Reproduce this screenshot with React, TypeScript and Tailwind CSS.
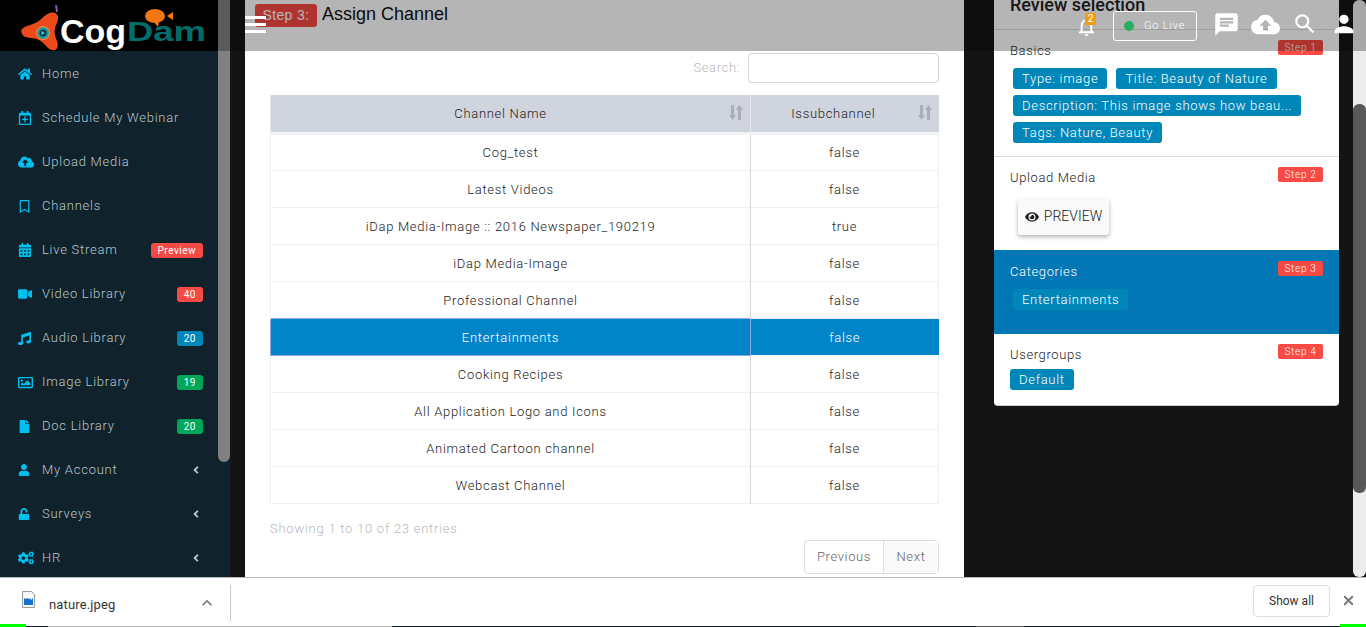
import React from "react";
import { FaHome, FaRegCalendarPlus, FaCloudUploadAlt, FaRegBookmark, FaCalendarAlt, FaVideo, FaMusic, FaRegImage, FaFile, FaUser, FaUnlock, FaCogs, FaAngleLeft, FaEye } from "react-icons/fa";
import { MdChat, MdCloudUpload, MdSearch, MdPerson, MdOutlineNotifications, MdKeyboardArrowUp } from "react-icons/md";
import { X } from "lucide-react";

const menu: { icon: React.ReactNode; label: string; badge?: string; color?: string; arrow?: boolean }[] = [
  { icon: <FaHome size={14} />, label: "Home" },
  { icon: <FaRegCalendarPlus size={14} />, label: "Schedule My Webinar" },
  { icon: <FaCloudUploadAlt size={16} />, label: "Upload Media" },
  { icon: <FaRegBookmark size={13} />, label: "Channels" },
  { icon: <FaCalendarAlt size={14} />, label: "Live Stream", badge: "Preview", color: "bg-[#f74a44]" },
  { icon: <FaVideo size={14} />, label: "Video Library", badge: "40", color: "bg-[#f74a44]" },
  { icon: <FaMusic size={13} />, label: "Audio Library", badge: "20", color: "bg-[#0087ba]" },
  { icon: <FaRegImage size={15} />, label: "Image Library", badge: "19", color: "bg-[#00a65a]" },
  { icon: <FaFile size={13} />, label: "Doc Library", badge: "20", color: "bg-[#00a65a]" },
  { icon: <FaUser size={12} />, label: "My Account", arrow: true },
  { icon: <FaUnlock size={12} />, label: "Surveys", arrow: true },
  { icon: <FaCogs size={16} />, label: "HR", arrow: true },
];

const rows = [
  ["Cog_test", "false"],
  ["Latest Videos", "false"],
  ["iDap Media-Image :: 2016 Newspaper_190219", "true"],
  ["iDap Media-Image", "false"],
  ["Professional Channel", "false"],
  ["Entertainments", "false"],
  ["Cooking Recipes", "false"],
  ["All Application Logo and Icons", "false"],
  ["Animated Cartoon channel", "false"],
  ["Webcast Channel", "false"],
];

function Tag({ children, className = "" }: { children: React.ReactNode; className?: string }) {
  return <span className={`inline-block h-[21px] rounded-[3px] bg-[#0087ba] px-[9px] text-[13px] leading-[21px] tracking-[0.7px] text-white whitespace-nowrap ${className}`}>{children}</span>;
}

function Step({ n }: { n: number }) {
  return <span className="-mt-[1px] flex h-[15px] w-[45px] items-center justify-center rounded-[2px] bg-[#f74a44] text-[10px] tracking-[0.7px] text-white">Step {n}</span>;
}

function SortIcon() {
  return (
    <svg width="14" height="16" viewBox="0 0 14 16" className="text-[#a9aeb8]" fill="currentColor">
      <path d="M2 0h3v10h2l-3.5 5L0 10h2z" />
      <path d="M10.5 0 14 5h-2v10H9V5H7z" />
    </svg>
  );
}

export default function App() {
  return (
    <div className="relative flex h-[627px] w-[1366px] flex-col overflow-hidden bg-[#141414] font-['Roboto',sans-serif] font-light">
      <main className="flex h-[577px] shrink-0">
        {/* Sidebar */}
        <aside className="flex w-[230px] shrink-0">
          <div className="w-[218px] bg-[#10222b]">
            <div className="h-[51px] bg-black" />
            <ul className="pt-[1px]">
              {menu.map((m) => (
                <li key={m.label} className="flex h-[44px] items-center pl-[18px] pr-[15px]">
                  <span className="flex w-[24px] shrink-0 items-center text-[#00c0ef]">{m.icon}</span>
                  <span className="flex-1 text-[13px] tracking-[0.75px] text-[#b8c7ce]">{m.label}</span>
                  {m.badge && (
                    <span className={`flex h-[15px] items-center rounded-[3px] px-[7px] text-[10px] font-normal tracking-[0.5px] text-white ${m.color}`}>{m.badge}</span>
                  )}
                  {m.arrow && <FaAngleLeft size={12} className="mr-[1px] text-[#b8c7ce]" />}
                </li>
              ))}
            </ul>
          </div>
          <div className="w-[12px] bg-[#10222b]">
            <div className="h-[462px] rounded-b-[6px] bg-[#808080]" />
          </div>
        </aside>

        <div className="w-[15px] shrink-0 bg-[#141414]" />

        {/* Main panel */}
        <section className="w-[719px] shrink-0 overflow-hidden bg-white px-[25px]">
          <div className="flex h-[53px] items-start -ml-[15px]">
            <span className="mt-[4px] flex h-[23px] w-[62px] items-center justify-center rounded-[3px] bg-[#f74a44] font-['Liberation_Sans',sans-serif] text-[14px] font-normal tracking-[0.4px] text-white">Step 3:</span>
            <span className="ml-[5px] mt-[3px] font-['Liberation_Sans',sans-serif] text-[18px] font-normal leading-[22px] text-[#111]">Assign Channel</span>
          </div>
          <div className="flex h-[30px] w-[669px] items-center justify-end">
            <span className="mr-[8px] text-[13px] tracking-[0.62px] text-[#b8b8b8]">Search:</span>
            <div className="h-[30px] w-[191px] rounded-[4px] border border-[#d2d6de] bg-white" />
          </div>
          <table className="mt-[12px] w-[669px] table-fixed border-collapse text-[13px] tracking-[0.7px] text-[#222]">
            <thead>
              <tr className="h-[38px] border-b-[3px] border-[#f4f4f4] bg-[#d0d4de]">
                <th className="relative w-[480px] border-l border-r border-[#e8e8e8] font-light">
                  <span className="-ml-[20px]">Channel Name</span>
                  <span className="absolute right-[7px] top-[10px]"><SortIcon /></span>
                </th>
                <th className="relative font-light">
                  <span className="-ml-[23px]">Issubchannel</span>
                  <span className="absolute right-[7px] top-[10px]"><SortIcon /></span>
                </th>
              </tr>
            </thead>
            <tbody>
              {rows.map(([a, b], i) => {
                const sel = i === 5;
                return (
                  <tr key={a} className={`h-[37px] ${sel ? "text-white" : "border-b border-[#f0f0f0]"}`}>
                    <td className={`pt-[2px] text-center ${sel ? "border border-[#8fa9e8] bg-[#0284c9]" : "border-l border-r border-l-[#f0f0f0] border-r-[#d8d8d8]"}`}>{a}</td>
                    <td className={`pt-[2px] text-center ${sel ? "bg-[#0284c9]" : "border-r border-[#f0f0f0]"}`}>{b}</td>
                  </tr>
                );
              })}
            </tbody>
          </table>
          <div className="mt-[13px] flex w-[669px] items-start justify-between">
            <span className="mt-[2px] text-[13px] tracking-[0.75px] text-[#b8b8b8]">Showing 1 to 10 of 23 entries</span>
            <div className="mt-[23px] flex h-[34px] rounded-[4px] border border-[#ddd] text-[13px] tracking-[0.62px] text-[#666]">
              <span className="flex w-[79px] items-center justify-center border-r border-[#ddd]">Previous</span>
              <span className="flex w-[54px] items-center justify-center bg-[#fafafa]">Next</span>
            </div>
          </div>
        </section>

        <div className="w-[30px] shrink-0 bg-[#141414]" />

        {/* Review card */}
        <section className="h-[406px] w-[345px] shrink-0 overflow-hidden rounded-b-[4px] border-b border-[#ccc] bg-white">
          <div className="flex h-[30px] items-start border-b border-[#ddd] pl-[16px]">
            <h3 className="-mt-[5px] text-[18px] leading-[20px] font-medium text-[#222]">Review selection</h3>
          </div>
          <div className="h-[127px] border-b border-[#ddd] pl-[19px] pr-[16px]">
            <div className="-ml-[3px] flex items-start justify-between pt-[11px]">
              <span className="text-[13px] tracking-[0.62px] text-[#222]">Basics</span>
              <Step n={1} />
            </div>
            <div className="mt-[1px] flex flex-wrap gap-x-[9px] gap-y-[6px] pt-[6px]">
              <Tag>Type: image</Tag>
              <Tag>Title: Beauty of Nature</Tag>
              <Tag>Description: This image shows how beau...</Tag>
              <Tag>Tags: Nature, Beauty</Tag>
            </div>
          </div>
          <div className="h-[93px] px-[16px] pt-[11px]">
            <div className="flex items-start justify-between">
              <span className="text-[13px] tracking-[0.62px] text-[#222]">Upload Media</span>
              <Step n={2} />
            </div>
            <div className="ml-[8px] mt-[11px] flex h-[36px] w-[91px] items-center justify-center gap-[5px] rounded-[3px] bg-[#fafafa] text-[14px] text-[#222] shadow-[0_2px_4px_rgba(0,0,0,0.3)]">
              <FaEye size={14} />
              <span>PREVIEW</span>
            </div>
          </div>
          <div className="h-[84px] bg-[#0277b5] pl-[19px] pr-[16px] pt-[12px]">
            <div className="-ml-[3px] flex items-start justify-between">
              <span className="text-[13px] tracking-[0.62px] text-white">Categories</span>
              <Step n={3} />
            </div>
            <Tag className="mt-[7px]">Entertainments</Tag>
          </div>
          <div className="px-[16px] pt-[11px]">
            <div className="flex items-start justify-between">
              <span className="text-[13px] tracking-[0.62px] text-[#222]">Usergroups</span>
              <Step n={4} />
            </div>
            <Tag className="mt-[4px]">Default</Tag>
          </div>
        </section>

        <div className="w-[14px] shrink-0 bg-[#141414]" />
        <div className="flex-1 rounded-[6px] bg-[#ececec]">
          <div className="h-[104px]" />
          <div className="h-[389px] rounded-[6px] bg-[#585858]" />
        </div>
      </main>

      {/* Download bar */}
      <footer className="relative flex h-[50px] shrink-0 items-center border-t border-[#b8b8b8] bg-white">
        <svg width="13" height="17" viewBox="0 0 13 17" className="ml-[22px] mb-[6px] shrink-0">
          <path d="M.5.5h9l3 3v13H.5z" fill="#f4f4f4" stroke="#9a9a9a" />
          <rect x="2" y="4" width="9" height="10" fill="#1272d0" />
          <path d="M2 4h9v3l-2 2-1-2-1 1-2-1-1 1-2-1z" fill="#fff" />
        </svg>
        <span className="ml-[14px] mt-[4px] text-[13px] font-normal tracking-[0.15px] text-[#333]">nature.jpeg</span>
        <MdKeyboardArrowUp size={20} className="ml-[81px] shrink-0 text-[#777]" />
        <div className="ml-[13px] h-[36px] w-px bg-[#c8c8c8]" />
        <div className="mb-[4px] ml-auto flex h-[32px] w-[77px] items-center justify-center rounded-[4px] border border-[#ddd] text-[12px] font-normal text-[#333]">Show all</div>
        <X size={15} strokeWidth={3} className="mb-[4px] ml-[11px] mr-[10px] text-[#777]" />
        <div className="absolute inset-x-0 bottom-0 flex h-px">
          <div className="w-[48px] bg-[#10222b]" />
          <div className="w-[344px] bg-[#b8b8b8]" />
          <div className="w-[584px] bg-[#10222b]" />
          <div className="w-[48px] bg-[#555555]" />
          <div className="flex-1 bg-[#10222b]" />
        </div>
        <div className="absolute bottom-0 left-0 h-[3px] w-[26px] bg-[#00ff00]" />
        <div className="absolute bottom-0 right-0 h-[3px] w-[26px] bg-[#00ff00]" />
      </footer>

      {/* Translucent header over the page */}
      <header className="absolute inset-x-0 top-0 flex h-[51px] items-start bg-[rgba(0,0,0,0.29)]">
        <div className="mt-[5px] flex w-[218px] items-start pl-[21px]">
          <svg width="42" height="46" viewBox="0 0 42 46" className="shrink-0">
            <path d="M36 7l-1-7" stroke="#8a5a9a" strokeWidth="2" fill="none" />
            <path d="M1 24C5 20 13 20 19 15C24 11 28 6 34 8C39 10 37 16 35 20C33 25 33 29 36 36C38 42 36 46 31 45C26 44 24 38 18 35C12 32 3 34 1 29C0 27 0 25 1 24z" fill="#ec4a1c" />
            <circle cx="22" cy="28" r="7" fill="#ff8a3c" />
            <circle cx="22" cy="28" r="6" fill="#1d9aa6" />
            <circle cx="22" cy="28" r="3.5" fill="#0b3a44" />
            <path d="M20.5 26l3.5 2-3.5 2z" fill="#4ad0d8" />
          </svg>
          <span className="-ml-[3px] mt-[9px] font-['Liberation_Sans',sans-serif] text-[34px] font-bold leading-[34px] text-white">Cog</span>
          <span className="relative ml-[1px] mt-[11px] inline-block origin-left scale-x-[1.3] font-['Liberation_Sans',sans-serif] text-[28px] font-bold leading-[32px] text-[#006d6d]">
            Dam
          </span>
          <svg width="30" height="20" viewBox="0 0 30 20" className="-ml-[43px] mt-[3px] shrink-0">
            <ellipse cx="10" cy="8" rx="10" ry="7" fill="#f27612" />
            <path d="M8 13l5 6 1-6z" fill="#f27612" />
            <path d="M22 8l6-4v8z" fill="#f27612" />
          </svg>
        </div>
        <div className="ml-[27px] mt-[16px] flex w-[21px] flex-col gap-[4px]">
          <span className="h-[3px] bg-white" />
          <span className="h-[3px] bg-white" />
          <span className="h-[3px] bg-white" />
        </div>
        <div className="ml-auto flex items-center pt-[6px] font-normal text-white">
          <span className="relative mr-[15px] mt-[5px] text-white">
            <MdOutlineNotifications size={23} />
            <span className="absolute -top-[2px] left-[10px] flex h-[12px] w-[11px] items-center justify-center rounded-[1px] bg-[#f39c12] text-[10px] leading-none text-white">2</span>
          </span>
          <div className="mr-[16px] mt-[5px] flex h-[30px] w-[84px] items-center rounded-[3px] border border-white pl-[10px] text-[11px] font-light tracking-[0.8px]">
            <span className="mr-[10px] h-[10px] w-[10px] rounded-full bg-[#27ae60]" />
            Go Live
          </div>
          <MdChat size={27} className="mr-[11px] mt-[1px]" />
          <MdCloudUpload size={29} className="mr-[12px] mt-[1px]" />
          <MdSearch size={26} className="mr-[12px] mt-[1px]" />
          <MdPerson size={28} className="mr-[8px] mt-[1px]" />
        </div>
      </header>
    </div>
  );
}
